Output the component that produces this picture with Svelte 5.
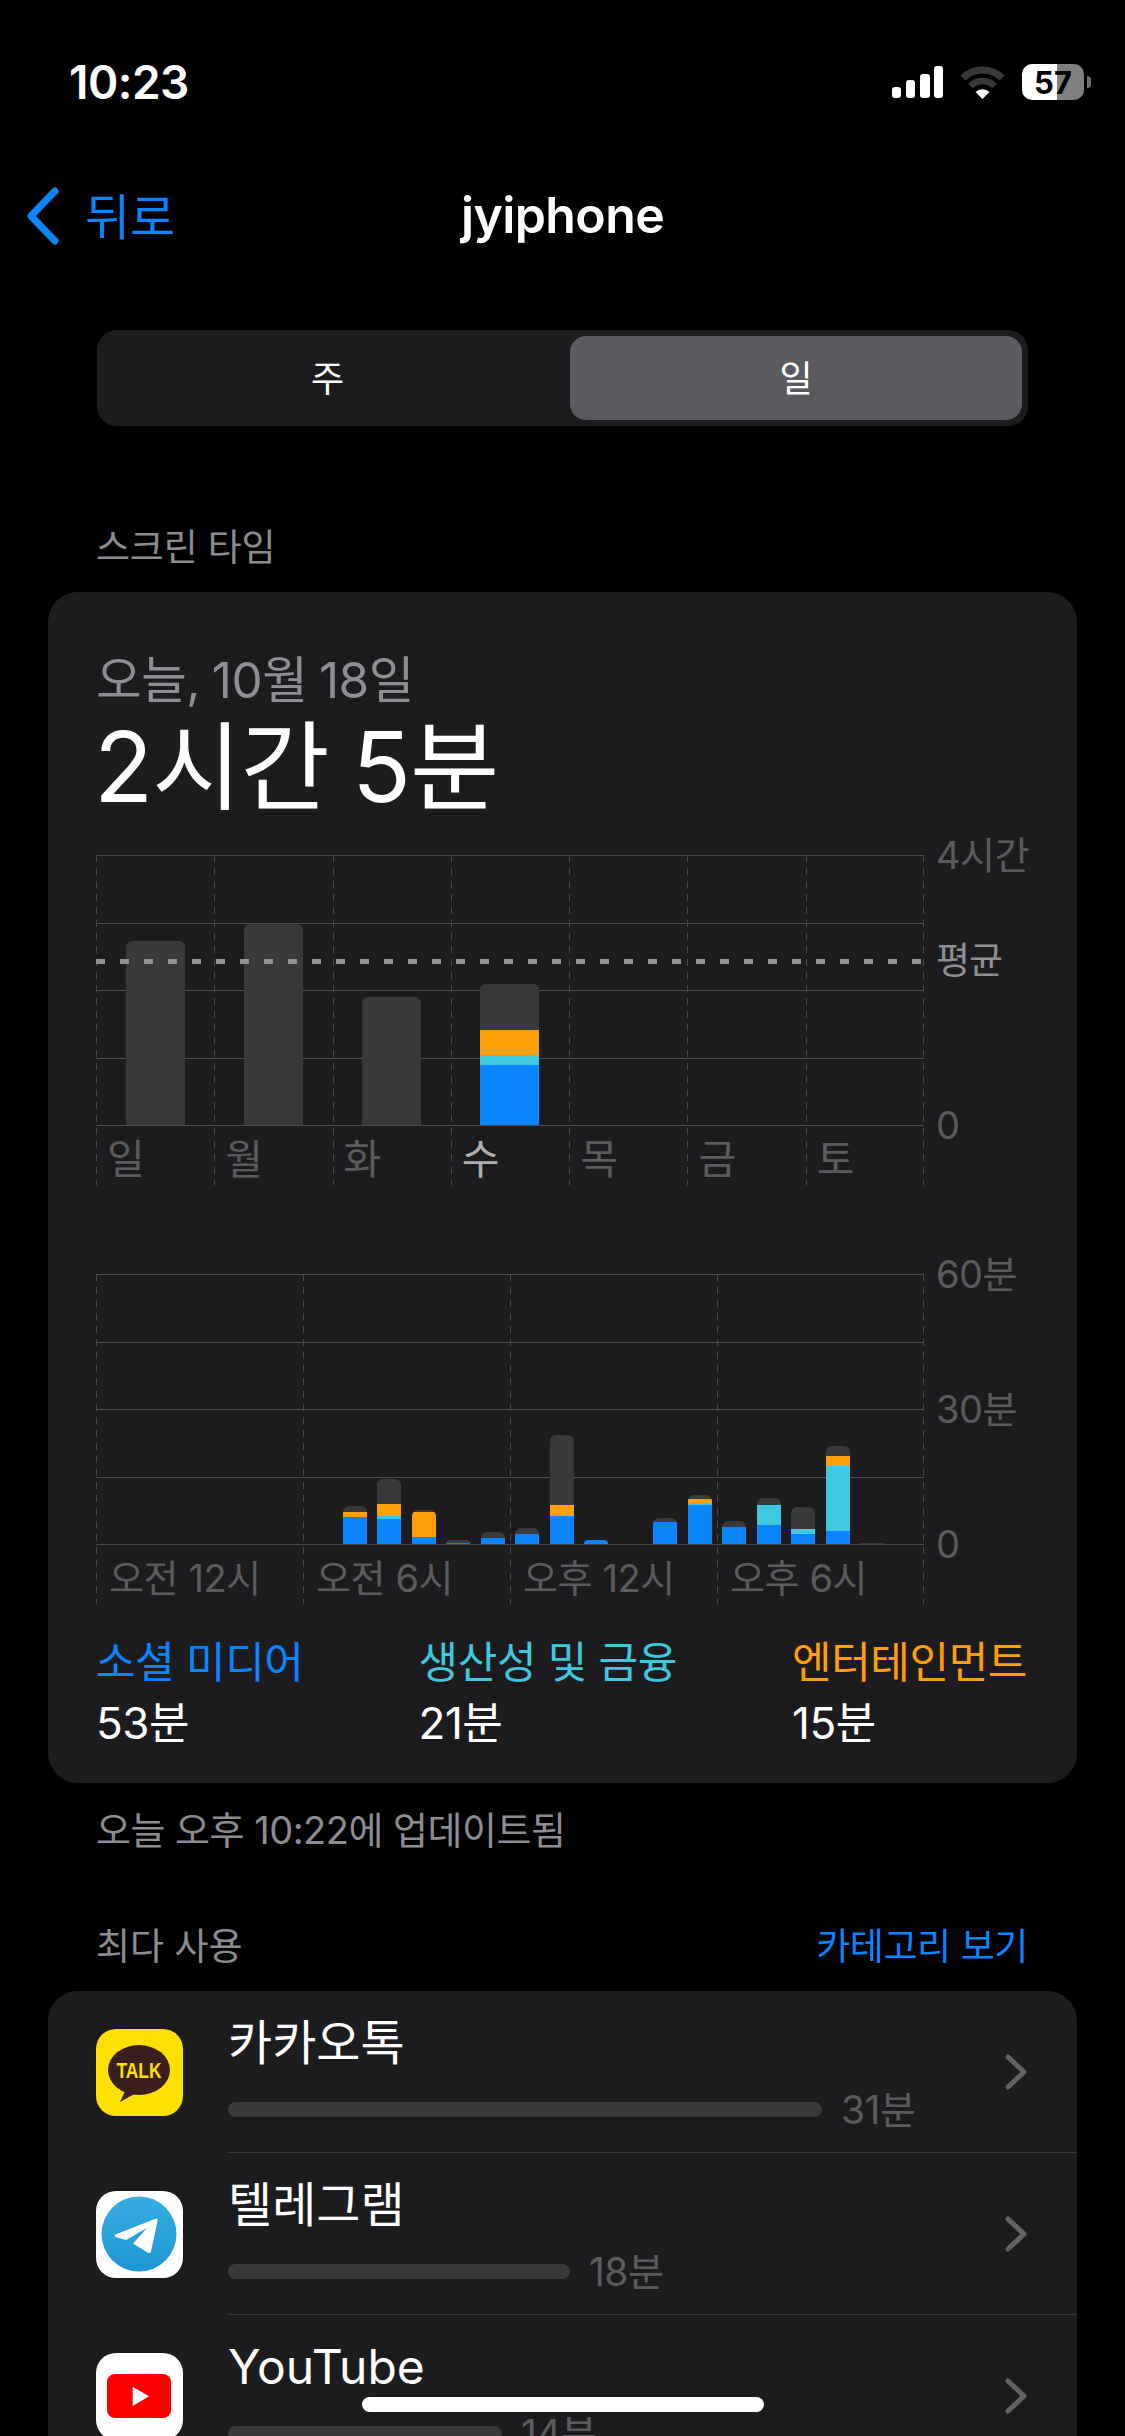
<script>
  const BLUE = '#0a84ff';
  const CYAN = '#40c8e0';
  const ORANGE = '#ff9f0a';
  const GRAY = '#3a3a3c';

  // px heights per bar, top to bottom: gray, orange, cyan, blue
  const days = [
    { label: '일', parts: [184, 0, 0, 0] },
    { label: '월', parts: [201, 0, 0, 0] },
    { label: '화', parts: [128, 0, 0, 0] },
    { label: '수', parts: [46, 25, 10, 60], today: true },
    { label: '목', parts: [0, 0, 0, 0] },
    { label: '금', parts: [0, 0, 0, 0] },
    { label: '토', parts: [0, 0, 0, 0] },
  ];

  const hourly = {
    7: [6, 5, 0, 27],
    8: [25, 12, 3, 25],
    9: [2, 25, 0, 7],
    10: [3, 0, 0, 1],
    11: [6, 0, 0, 6],
    12: [6, 0, 0, 10],
    13: [70, 11, 0, 28],
    14: [0, 0, 0, 4],
    16: [4, 0, 0, 22],
    17: [4, 4, 2, 39],
    18: [6, 0, 0, 17],
    19: [7, 0, 20, 19],
    20: [22, 1, 4, 10],
    21: [10, 10, 65, 13],
    22: [1, 0, 0, 0],
  };
  const hours = Array.from({ length: 24 }, (_, i) => hourly[i] || [0, 0, 0, 0]);
  const hourLabels = ['오전 12시', '오전 6시', '오후 12시', '오후 6시'];
  const colors = [GRAY, ORANGE, CYAN, BLUE];

  const legend = [
    { name: '소셜 미디어', value: '53분', color: BLUE },
    { name: '생산성 및 금융', value: '21분', color: CYAN },
    { name: '엔터테인먼트', value: '15분', color: ORANGE },
  ];

  const apps = [
    { name: '카카오톡', icon: 'kakao', width: 594, time: '31분' },
    { name: '텔레그램', icon: 'telegram', width: 342, time: '18분' },
    { name: 'YouTube', icon: 'youtube', width: 274, time: '14분' },
  ];
</script>

<div class="screen">
  <div class="status">
    <span class="clock">10:23</span>
    <div class="status-icons">
      <svg width="51" height="32" viewBox="0 0 51 32" fill="#fff">
        <rect x="0" y="21" width="9" height="11" rx="3" />
        <rect x="14" y="14" width="9" height="18" rx="3" />
        <rect x="28" y="8" width="10" height="24" rx="3" />
        <rect x="42" y="0" width="9" height="32" rx="3" />
      </svg>
      <svg width="45" height="33" viewBox="0 0 45 33" fill="none">
        <path d="M3 12 A 28 28 0 0 1 42 12" stroke="#3a3a3a" stroke-width="7" />
        <path d="M10.5 20 A 17 17 0 0 1 34.5 20" stroke="#3a3a3a" stroke-width="6.5" />
        <path d="M15.5 26 A 10 10 0 0 1 29.5 26 L22.5 33 Z" fill="#fff" />
      </svg>
      <div class="battery"><span>57</span></div>
    </div>
  </div>

  <div class="nav">
    <div class="back">
      <svg width="34" height="58" viewBox="0 0 34 58" fill="none">
        <path d="M29 4 L5 29 L29 54" stroke="#0a84ff" stroke-width="7" stroke-linecap="round" stroke-linejoin="round" />
      </svg>
      <span>뒤로</span>
    </div>
    <div class="title">jyiphone</div>
  </div>

  <div class="segment">
    <div class="seg-item first">주</div>
    <div class="seg-item active">일</div>
  </div>

  <div class="section-label">스크린 타임</div>

  <div class="card summary">
    <div class="date">오늘, 10월 18일</div>
    <div class="total">2시간 5분</div>

    <div class="chart week">
      <div class="plot">
        <div class="cols">
          {#each days as d}
            <div class="col" class:today={d.today}><span>{d.label}</span></div>
          {/each}
        </div>
        <div class="lines">
          {#each [0, 1, 2, 3, 4] as l}<i></i>{/each}
        </div>
        <div class="bars">
          {#each days as d}
            <div class="slot">
              <div class="bar wide">
                {#each d.parts as h, i}
                  {#if h}<div style="height:{h}px;background:{colors[i]}"></div>{/if}
                {/each}
              </div>
            </div>
          {/each}
        </div>
        <div class="avg"></div>
      </div>
      <div class="yaxis">
        <span style="top:0">4시간</span>
        <span class="avg-label" style="top:106px">평균</span>
        <span style="top:270px">0</span>
      </div>
    </div>

    <div class="chart day">
      <div class="plot">
        <div class="cols">
          {#each hourLabels as t}
            <div class="col"><span>{t}</span></div>
          {/each}
        </div>
        <div class="lines">
          {#each [0, 1, 2, 3, 4] as l}<i></i>{/each}
        </div>
        <div class="bars">
          {#each hours as parts}
            <div class="slot">
              <div class="bar">
                {#each parts as h, i}
                  {#if h}<div style="height:{h}px;background:{colors[i]}"></div>{/if}
                {/each}
              </div>
            </div>
          {/each}
        </div>
      </div>
      <div class="yaxis">
        <span style="top:0">60분</span>
        <span style="top:135px">30분</span>
        <span style="top:270px">0</span>
      </div>
    </div>

    <div class="legend">
      {#each legend as item}
        <div>
          <div class="legend-name" style="color:{item.color}">{item.name}</div>
          <div class="legend-value">{item.value}</div>
        </div>
      {/each}
    </div>
  </div>

  <div class="updated">오늘 오후 10:22에 업데이트됨</div>

  <div class="most-head">
    <span>최다 사용</span>
    <span class="link">카테고리 보기</span>
  </div>

  <div class="card apps">
    {#each apps as app}
      <div class="row">
        <div class="icon">
          {#if app.icon === 'kakao'}
            <svg width="87" height="87" viewBox="0 0 87 87">
              <rect width="87" height="87" rx="20" fill="#fde000" />
              <ellipse cx="43" cy="41" rx="31" ry="25" fill="#3c1e1e" />
              <path d="M30 60 L24 73 L42 63 Z" fill="#3c1e1e" />
              <text x="43" y="49" text-anchor="middle" class="talk" textLength="45" lengthAdjust="spacingAndGlyphs">TALK</text>
            </svg>
          {:else if app.icon === 'telegram'}
            <svg width="87" height="87" viewBox="0 0 87 87">
              <defs>
                <linearGradient id="tg" x1="0" y1="0" x2="0" y2="1">
                  <stop offset="0" stop-color="#37aee2" />
                  <stop offset="1" stop-color="#1e96d2" />
                </linearGradient>
              </defs>
              <rect width="87" height="87" rx="20" fill="#fff" />
              <circle cx="43" cy="43" r="37.5" fill="url(#tg)" />
              <path d="M60 27.5 Q62 27 61.7 29 L55 60.5 Q54 63 51.5 61.5 L37 52.5 L51 37 L30 49 L19.5 46 Q17.5 45 19.5 43.5 Z" fill="#fff" />
            </svg>
          {:else}
            <svg width="87" height="87" viewBox="0 0 87 87">
              <rect width="87" height="87" rx="20" fill="#fff" />
              <rect x="11" y="21" width="64" height="44" rx="8" fill="#ff0000" />
              <path d="M36.7 33.7 L53 43.3 L36.7 53 Z" fill="#fff" />
            </svg>
          {/if}
        </div>
        <div class="row-body">
          <div class="row-main">
            <div class="app-name">{app.name}</div>
            <div class="meter">
              <div class="meter-bar" style="width:{app.width}px"></div>
              <span>{app.time}</span>
            </div>
          </div>
          <svg class="chev" width="22" height="36" viewBox="0 0 22 36" fill="none">
            <path d="M3 3 L19 18 L3 33" stroke="#636366" stroke-width="5" stroke-linecap="round" stroke-linejoin="round" />
          </svg>
        </div>
      </div>
    {/each}
  </div>

  <div class="home-bar"></div>
</div>

<style>
  :global(body) {
    margin: 0;
    background: #000;
  }

  .screen {
    position: relative;
    width: 1125px;
    height: 2436px;
    overflow: hidden;
    background: #000;
    color: #fff;
    font-family: Inter, "Noto Sans CJK KR", sans-serif;
  }

  /* status bar */
  .status {
    height: 164px;
    display: flex;
    align-items: center;
    justify-content: space-between;
    padding: 0 34px 0 69px;
  }
  .clock {
    font-size: 46px;
    font-weight: 600;
    letter-spacing: -0.5px;
  }
  .status-icons {
    display: flex;
    align-items: center;
    gap: 17px;
  }
  .battery {
    position: relative;
    width: 62px;
    height: 36px;
    border-radius: 10px;
    background: linear-gradient(90deg, #fff 56%, #808080 56%);
    display: flex;
    align-items: center;
    justify-content: center;
    color: #000;
    font-size: 31px;
    font-weight: 700;
    margin-right: 7px;
  }
  .battery::after {
    content: '';
    position: absolute;
    right: -7px;
    top: 12px;
    width: 4px;
    height: 12px;
    border-radius: 0 6px 6px 0;
    background: #6e6e6e;
  }

  /* nav */
  .nav {
    height: 104px;
    display: grid;
    grid-template-columns: 1fr auto 1fr;
    align-items: center;
  }
  .back {
    display: flex;
    align-items: center;
    gap: 25px;
    padding-left: 26px;
    color: #0a84ff;
    font-size: 49px;
  }
  .back span {
    margin-top: -5px;
  }
  .title {
    grid-column: 2;
    font-size: 50px;
    font-weight: 600;
    letter-spacing: -0.6px;
    padding-bottom: 3px;
  }

  /* segmented control */
  .segment {
    margin: 62px 97px 0;
    height: 96px;
    box-sizing: border-box;
    padding: 6px;
    background: #1c1c1e;
    border-radius: 20px;
    display: grid;
    grid-template-columns: 1fr 452px;
  }
  .seg-item {
    display: flex;
    align-items: center;
    justify-content: center;
    font-size: 36px;
    border-radius: 16px;
    padding-bottom: 5px;
  }
  .seg-item.first {
    padding-right: 18px;
  }
  .seg-item.active {
    background: #5a5a5f;
  }

  .section-label {
    margin: 102px 0 24px 96px;
    height: 40px;
    line-height: 40px;
    font-size: 37px;
    letter-spacing: -0.2px;
    color: #8d8d93;
  }

  .card {
    margin: 0 48px;
    background: #1c1c1e;
    border-radius: 30px;
  }

  /* summary card */
  .summary {
    padding: 58px 50px 36px 48px;
  }
  .date {
    height: 60px;
    line-height: 60px;
    font-size: 49.5px;
    color: #8e8e93;
    letter-spacing: -0.4px;
    word-spacing: -2px;
  }
  .total {
    margin-top: 2px;
    height: 110px;
    line-height: 110px;
    font-size: 97px;
    letter-spacing: -1px;
    word-spacing: -3px;
    font-weight: 400;
    margin-left: -2px;
  }

  .chart {
    display: flex;
    height: 330px;
  }
  .week {
    margin-top: 33px;
  }
  .day {
    margin-top: 89px;
  }
  .plot {
    position: relative;
    width: 828px;
    flex: none;
  }
  .cols {
    display: flex;
    height: 100%;
    background: repeating-linear-gradient(180deg, #48484a 0 7px, transparent 7px 13px) right top / 1px 100% no-repeat;
  }
  .col {
    flex: 1;
    box-sizing: border-box;
    padding: 279px 0 0 13px;
    background: repeating-linear-gradient(180deg, #48484a 0 7px, transparent 7px 13px) left top / 1px 100% no-repeat;
    color: #5c5c5f;
    font-size: 38px;
    white-space: nowrap;
  }
  .col span {
    display: block;
    height: 51px;
    line-height: 51px;
    letter-spacing: -0.4px;
  }
  .week .col {
    font-size: 41px;
    padding-left: 11px;
  }
  .col.today {
    color: #aeaeb2;
  }
  .lines {
    position: absolute;
    left: 0;
    right: 0;
    top: 0;
    height: 271px;
    display: flex;
    flex-direction: column;
    justify-content: space-between;
  }
  .lines i {
    display: block;
    height: 1px;
    background: #4c4c4e;
  }
  .bars {
    position: absolute;
    left: 0;
    right: 0;
    top: 0;
    height: 270px;
    display: flex;
  }
  .slot {
    flex: 1;
    display: flex;
    align-items: flex-end;
    justify-content: center;
  }
  .bar {
    width: 24px;
    border-radius: 6px 6px 0 0;
    overflow: hidden;
  }
  .bar.wide {
    width: 59px;
  }
  .avg {
    position: absolute;
    left: 0;
    right: 0;
    top: 104px;
    height: 5px;
    background: repeating-linear-gradient(90deg, #939393 0 9px, transparent 9px 24px);
  }
  .yaxis {
    position: relative;
    flex: 1;
    margin-left: 12px;
  }
  .yaxis span {
    position: absolute;
    left: 0;
    transform: translateY(-50%);
    font-size: 38px;
    line-height: 44px;
    color: #5c5c5f;
    white-space: nowrap;
    letter-spacing: -0.5px;
  }
  .yaxis .avg-label {
    color: #8e8e93;
    font-size: 37px;
    letter-spacing: -1px;
  }

  .legend {
    margin-top: 33px;
    display: flex;
    justify-content: space-between;
  }
  .legend-name {
    height: 50px;
    line-height: 50px;
    font-size: 43px;
    letter-spacing: -0.4px;
  }
  .legend-value {
    margin-top: 12px;
    height: 48px;
    line-height: 48px;
    font-size: 44px;
    letter-spacing: -0.5px;
  }

  .updated {
    margin: 27px 0 0 96px;
    height: 40px;
    line-height: 40px;
    font-size: 38px;
    letter-spacing: -0.5px;
    color: #8d8d93;
  }
  .most-head {
    margin: 77px 97px 24px 96px;
    height: 40px;
    line-height: 40px;
    font-size: 37px;
    color: #8d8d93;
    display: flex;
    justify-content: space-between;
  }
  .link {
    color: #0a84ff;
    letter-spacing: -0.4px;
  }

  /* app list */
  .apps {
    border-radius: 30px 30px 0 0;
  }
  .row {
    display: flex;
    align-items: center;
    padding-left: 48px;
    gap: 45px;
    height: 162px;
  }
  .icon {
    width: 87px;
    height: 87px;
    flex: none;
  }
  .icon svg {
    display: block;
  }
  .talk {
    font-family: "Liberation Sans", sans-serif;
    font-size: 22px;
    font-weight: 700;
    fill: #fde000;
  }
  .row-body {
    flex: 1;
    height: 162px;
    box-sizing: border-box;
    border-bottom: 1px solid #38383a;
    display: flex;
    align-items: center;
    justify-content: space-between;
    padding-right: 50px;
  }
  .row:last-child .row-body {
    border-bottom: 0;
  }
  .row-main {
    align-self: flex-start;
    padding-top: 25px;
  }
  .app-name {
    height: 54px;
    line-height: 54px;
    font-size: 48px;
  }
  .meter {
    margin-top: 21px;
    display: flex;
    align-items: center;
    gap: 19px;
    height: 36px;
  }
  .meter-bar {
    height: 15px;
    border-radius: 8px;
    background: #3a3a3c;
  }
  .meter span {
    font-size: 39px;
    color: #5c5c5f;
    letter-spacing: -0.5px;
    margin-top: -4px;
  }

  .home-bar {
    position: absolute;
    left: 362px;
    top: 2397px;
    width: 402px;
    height: 15px;
    border-radius: 8px;
    background: #fff;
  }
</style>
